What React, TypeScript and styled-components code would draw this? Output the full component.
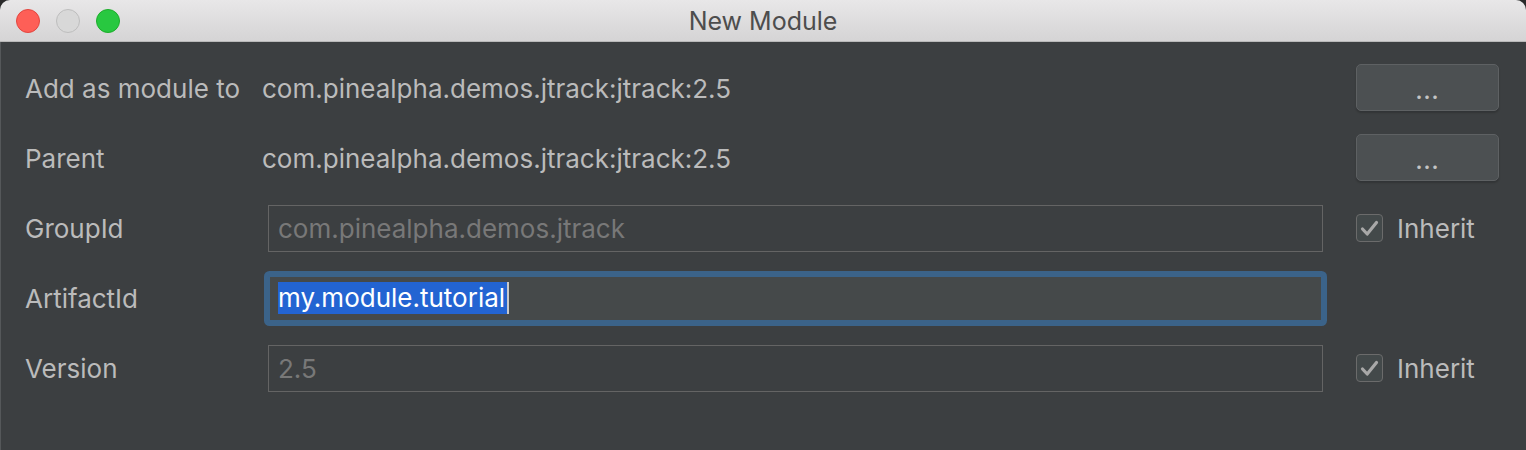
import React from "react";
import styled, { createGlobalStyle } from "styled-components";

const GlobalStyle = createGlobalStyle`
  html, body {
    margin: 0;
    padding: 0;
    background: #2a2a2a;
  }
  body {
    font-family: Inter, "Noto Sans", "Liberation Sans", sans-serif;
  }
`;

const Window = styled.div`
  width: 1526px;
  height: 450px;
  background: #3c3f41;
  border-radius: 10px 10px 0 0;
  overflow: hidden;
  box-shadow: inset 1px 0 0 #55585a;
  display: flex;
  flex-direction: column;
`;

const TitleBar = styled.div`
  height: 41px;
  flex-shrink: 0;
  background: linear-gradient(#e8e7e8, #d5d4d5);
  border-bottom: 1px solid #b9b9b9;
  display: flex;
  align-items: center;
  position: relative;
  padding-left: 16px;
`;

const Lights = styled.div`
  display: flex;
  gap: 16px;
`;

const Light = styled.span<{ $fill: string; $edge: string }>`
  width: 24px;
  height: 24px;
  border-radius: 50%;
  box-sizing: border-box;
  background: ${(p) => p.$fill};
  border: 1px solid ${(p) => p.$edge};
`;

const Title = styled.div`
  position: absolute;
  left: 0;
  right: 0;
  text-align: center;
  font-size: 25px;
  color: #4d4d4d;
  pointer-events: none;
`;

const Form = styled.div`
  display: grid;
  grid-template-columns: 237px 1061px 1fr;
  grid-auto-rows: 70px;
  align-items: center;
  padding: 11px 27px 0 25px;
  font-size: 26px;
`;

const Label = styled.div`
  color: #bbbbbb;
`;

const Value = styled.div`
  color: #bbbbbb;
`;

const Side = styled.div`
  padding-left: 33px;
  display: flex;
  align-items: center;
`;

const BrowseButton = styled.button`
  width: 143px;
  height: 47px;
  margin-bottom: 2px;
  box-sizing: border-box;
  border: 1px solid #5e6163;
  border-radius: 5px;
  background: #4c5052;
  box-shadow: 0 2px 2px rgba(0, 0, 0, 0.18);
  color: #c4c4c4;
  font-family: inherit;
  font-size: 22px;
  font-weight: 600;
  letter-spacing: 1px;
  padding: 8px 0 0;
  line-height: 1;
`;

const Field = styled.div<{ $focused?: boolean }>`
  margin-left: 6px;
  height: 47px;
  box-sizing: border-box;
  display: flex;
  align-items: center;
  padding-left: ${(p) => (p.$focused ? "8px" : "9px")};
  border: ${(p) => (p.$focused ? "2px solid #3b6389" : "1px solid #646464")};
  background: ${(p) => (p.$focused ? "#45494a" : "transparent")};
  box-shadow: ${(p) => (p.$focused ? "0 0 0 4px #3b6389" : "none")};
  border-radius: ${(p) => (p.$focused ? "2px" : "0")};
  color: ${(p) => (p.$focused ? "#ffffff" : "#787878")};
`;

const Selection = styled.span`
  background: #2364d2;
  color: #ffffff;
  line-height: 32px;
  padding: 0 2px 0 0;
`;

const Caret = styled.span`
  display: inline-block;
  width: 2px;
  height: 32px;
  background: #c8c8c8;
`;

const CheckRow = styled.label`
  display: flex;
  align-items: center;
  gap: 14px;
  color: #bbbbbb;
`;

const CheckBox = styled.span`
  width: 27px;
  height: 28px;
  box-sizing: border-box;
  border: 1px solid #6b6b6b;
  border-radius: 4px;
  background: #43494a;
  display: flex;
  align-items: center;
  justify-content: center;
`;

const Check = () => (
  <CheckBox>
    <svg width="19" height="17" viewBox="0 0 19 17">
      <path
        d="M2.5 9 L7.2 14 L16.5 2.5"
        fill="none"
        stroke="#a8a8a8"
        strokeWidth="3.2"
        strokeLinecap="round"
        strokeLinejoin="round"
      />
    </svg>
  </CheckBox>
);

const App = () => {
  return (
    <Window>
      <GlobalStyle />
      <TitleBar>
        <Lights>
          <Light $fill="#fe5f57" $edge="#e2463f" />
          <Light $fill="#d8d8d8" $edge="#bdbdbd" />
          <Light $fill="#28c840" $edge="#1dad2b" />
        </Lights>
        <Title>New Module</Title>
      </TitleBar>
      <Form>
        <Label>Add as module to</Label>
        <Value>com.pinealpha.demos.jtrack:jtrack:2.5</Value>
        <Side>
          <BrowseButton type="button">...</BrowseButton>
        </Side>

        <Label>Parent</Label>
        <Value>com.pinealpha.demos.jtrack:jtrack:2.5</Value>
        <Side>
          <BrowseButton type="button">...</BrowseButton>
        </Side>

        <Label>GroupId</Label>
        <Field>com.pinealpha.demos.jtrack</Field>
        <Side>
          <CheckRow>
            <Check />
            Inherit
          </CheckRow>
        </Side>

        <Label>ArtifactId</Label>
        <Field $focused>
          <Selection>my.module.tutorial</Selection>
          <Caret />
        </Field>
        <Side />

        <Label>Version</Label>
        <Field>2.5</Field>
        <Side>
          <CheckRow>
            <Check />
            Inherit
          </CheckRow>
        </Side>
      </Form>
    </Window>
  );
};

export default App;
